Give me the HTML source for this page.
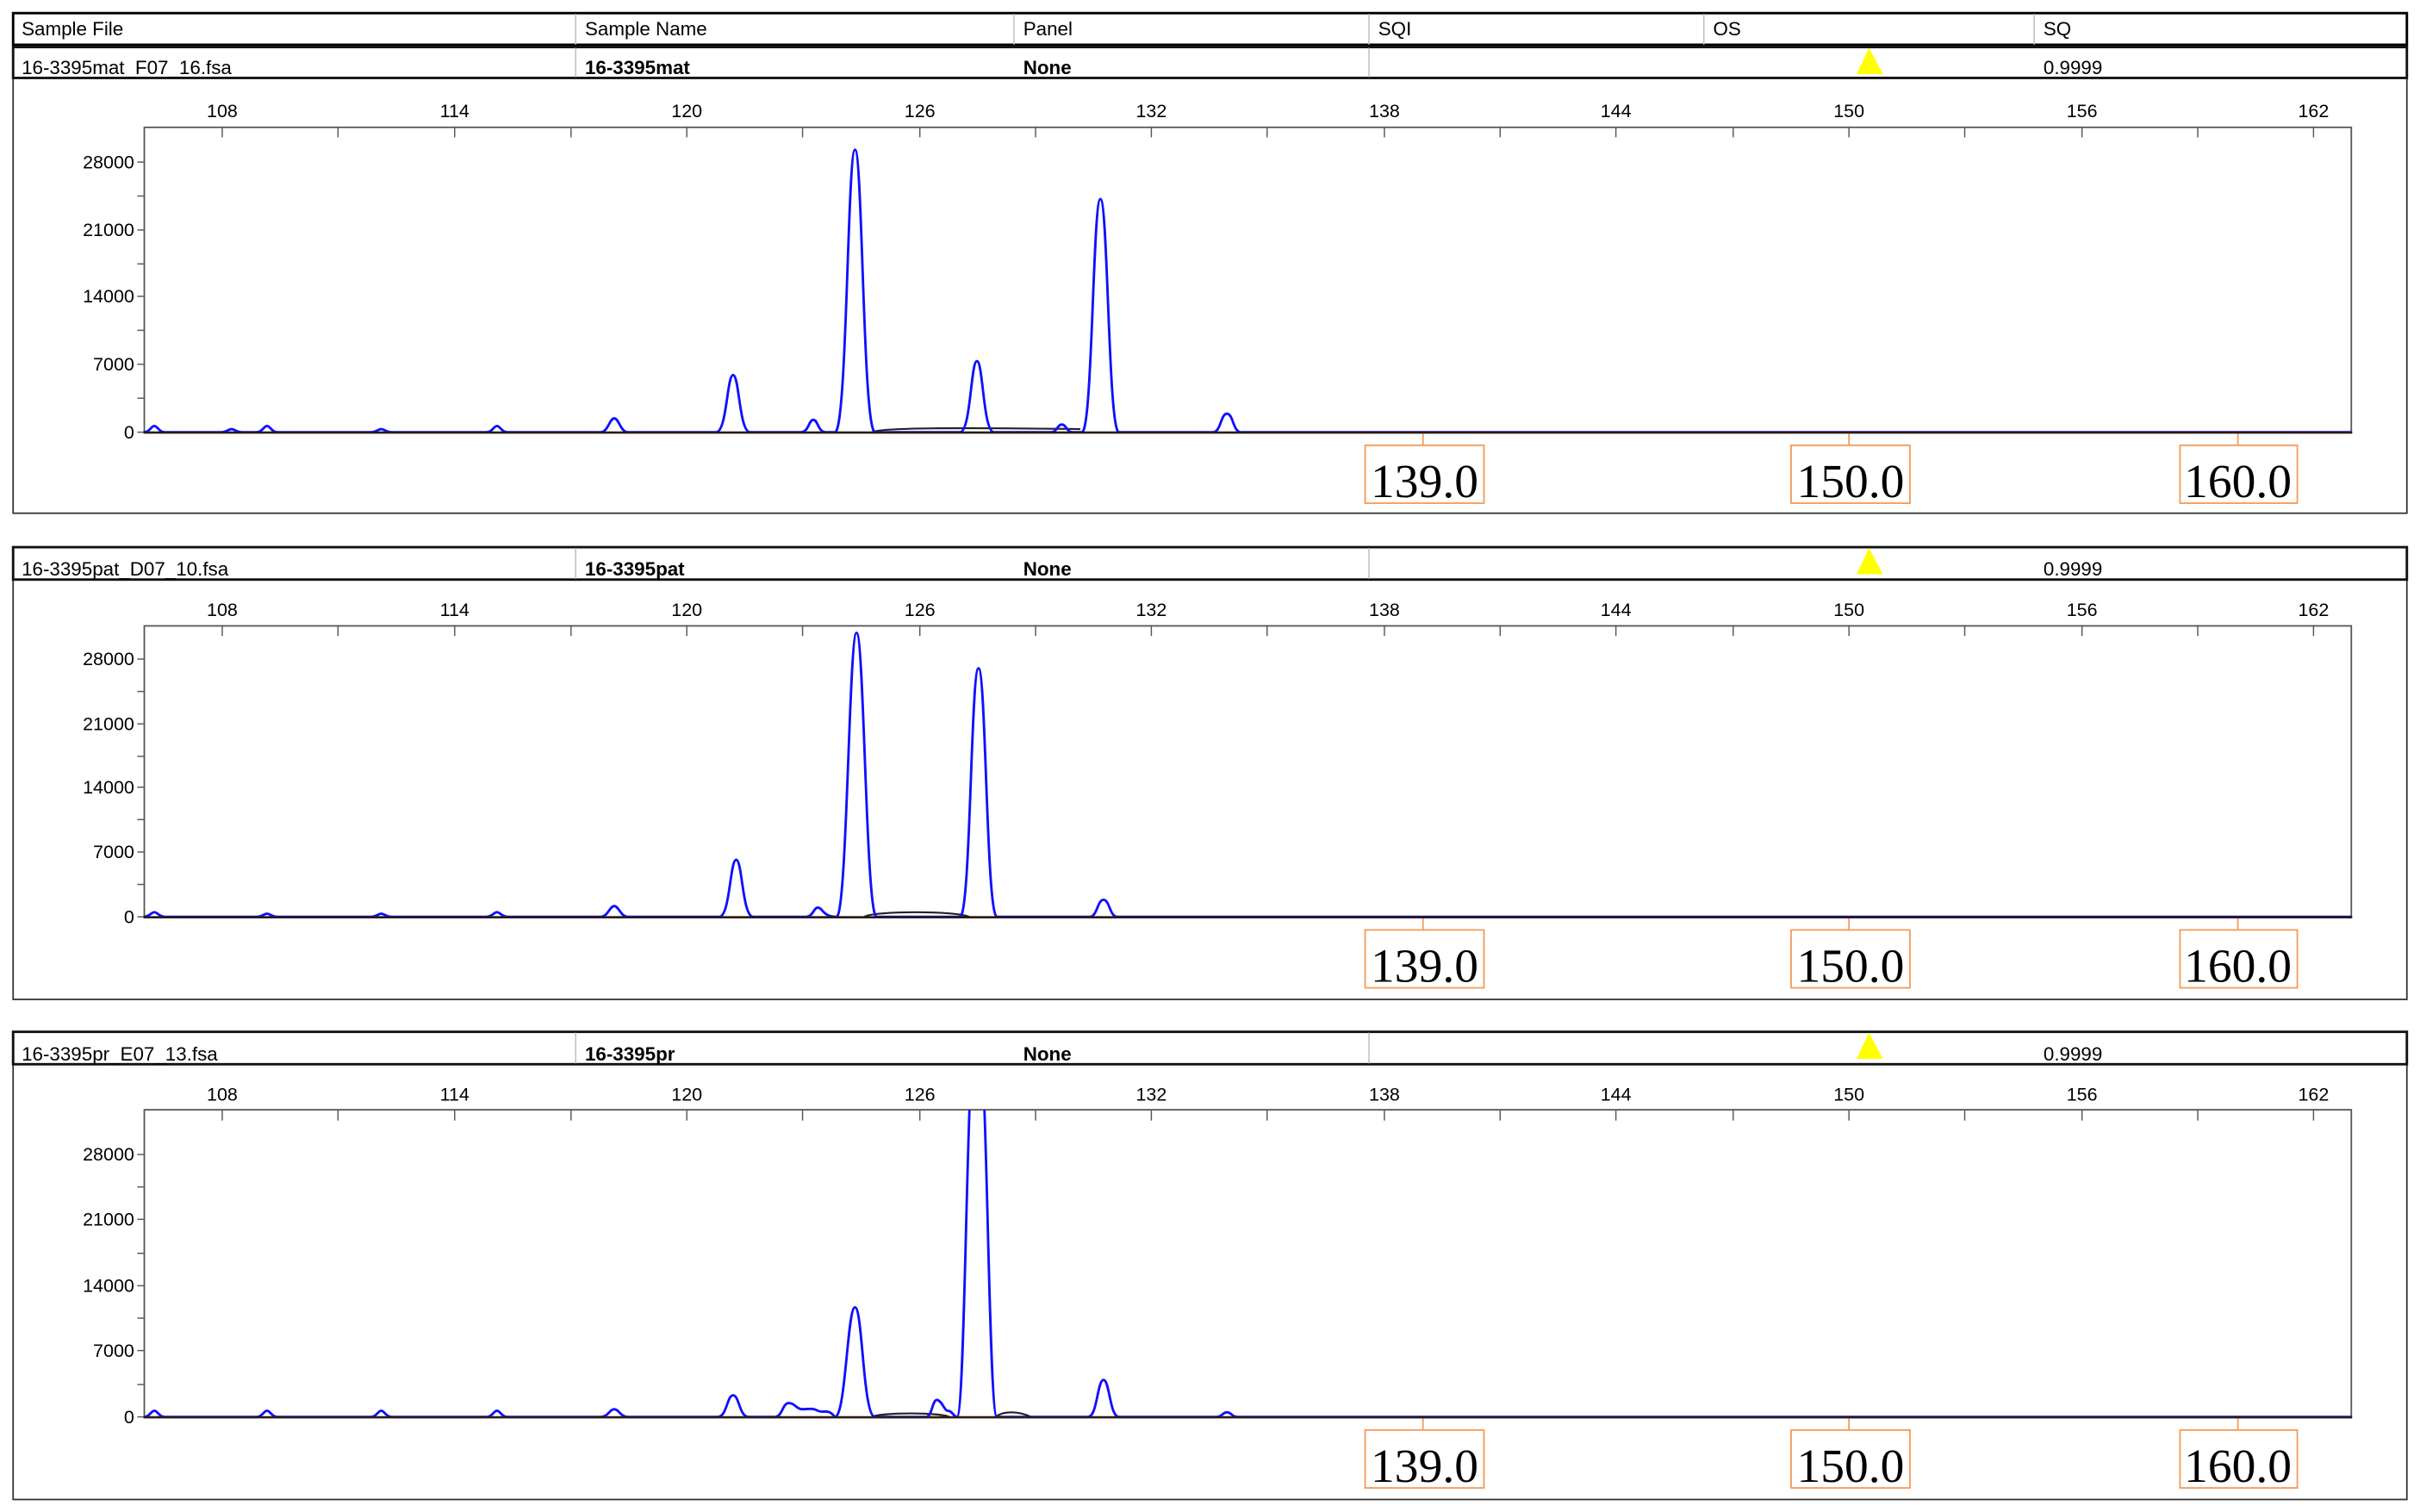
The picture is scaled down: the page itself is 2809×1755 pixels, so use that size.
<!DOCTYPE html>
<html><head><meta charset="utf-8"><style>
html,body{margin:0;padding:0;background:#fff;width:2809px;height:1755px;overflow:hidden}
svg{display:block}
text{font-family:"Liberation Sans",sans-serif}
.h{font-size:12.5px;fill:#000}
.ax{font-size:12px;fill:#000;text-anchor:middle}
.ay{font-size:12px;fill:#000;text-anchor:end}
.ob{font-family:"Liberation Serif",serif;font-size:31px;fill:#000;text-anchor:middle}
.tr{fill:none;stroke:#1010ff;stroke-width:1.6}
.bl{stroke:#2a1a10;stroke-width:1.4}
</style></head><body>
<svg width="2809" height="1755" viewBox="0 0 1568 979.6" preserveAspectRatio="none" xmlns="http://www.w3.org/2000/svg">
<defs>
<clipPath id="c3"><rect x="93" y="719" width="1431" height="201"/></clipPath>
</defs>
<rect x="8.5" y="8.5" width="1551" height="20.5" fill="#fff" stroke="#000" stroke-width="1.6"/>
<g stroke="#bbb" stroke-width="0.8"><line x1="373" y1="9" x2="373" y2="29"/><line x1="657" y1="9" x2="657" y2="29"/><line x1="887" y1="9" x2="887" y2="29"/><line x1="1104" y1="9" x2="1104" y2="29"/><line x1="1318" y1="9" x2="1318" y2="29"/></g>
<text class="h" x="14" y="23">Sample File</text><text class="h" x="379" y="23">Sample Name</text><text class="h" x="663" y="23">Panel</text><text class="h" x="893" y="23">SQI</text><text class="h" x="1110" y="23">OS</text><text class="h" x="1324" y="23">SQ</text>

<!-- PANEL 1 -->
<rect x="8.5" y="50.5" width="1551" height="282" fill="#fff" stroke="#333" stroke-width="1"/>
<rect x="8.5" y="30.5" width="1551" height="20" fill="#fff" stroke="#111" stroke-width="1.6"/>
<g stroke="#bbb" stroke-width="0.8"><line x1="373" y1="31" x2="373" y2="50"/><line x1="887" y1="31" x2="887" y2="50"/></g>
<text class="h" x="14" y="48">16-3395mat_F07_16.fsa</text><text class="h" x="379" y="48" font-weight="bold">16-3395mat</text><text class="h" x="663" y="48" font-weight="bold">None</text><text class="h" x="1324" y="48">0.9999</text>
<polygon points="1211,31 1203,48 1220,48" fill="#ffff00"/>
<rect x="93.5" y="82.5" width="1430" height="197.5" fill="none" stroke="#555" stroke-width="1"/>
<g stroke="#555" stroke-width="0.8">
<line x1="144" y1="82" x2="144" y2="89"/><line x1="219" y1="82" x2="219" y2="89"/><line x1="294.6" y1="82" x2="294.6" y2="89"/><line x1="370" y1="82" x2="370" y2="89"/><line x1="445" y1="82" x2="445" y2="89"/><line x1="520" y1="82" x2="520" y2="89"/><line x1="596" y1="82" x2="596" y2="89"/><line x1="671" y1="82" x2="671" y2="89"/><line x1="746" y1="82" x2="746" y2="89"/><line x1="821" y1="82" x2="821" y2="89"/><line x1="897" y1="82" x2="897" y2="89"/><line x1="972" y1="82" x2="972" y2="89"/><line x1="1047" y1="82" x2="1047" y2="89"/><line x1="1123" y1="82" x2="1123" y2="89"/><line x1="1198" y1="82" x2="1198" y2="89"/><line x1="1273" y1="82" x2="1273" y2="89"/><line x1="1349" y1="82" x2="1349" y2="89"/><line x1="1424" y1="82" x2="1424" y2="89"/><line x1="1499" y1="82" x2="1499" y2="89"/>
<line x1="89" y1="105" x2="93" y2="105"/><line x1="89" y1="127" x2="93" y2="127"/><line x1="89" y1="149" x2="93" y2="149"/><line x1="89" y1="171" x2="93" y2="171"/><line x1="89" y1="192" x2="93" y2="192"/><line x1="89" y1="214" x2="93" y2="214"/><line x1="89" y1="236" x2="93" y2="236"/><line x1="89" y1="258" x2="93" y2="258"/><line x1="89" y1="280" x2="93" y2="280"/>
</g>
<text class="ax" x="144" y="76">108</text><text class="ax" x="294.6" y="76">114</text><text class="ax" x="445" y="76">120</text><text class="ax" x="596" y="76">126</text><text class="ax" x="746" y="76">132</text><text class="ax" x="897" y="76">138</text><text class="ax" x="1047" y="76">144</text><text class="ax" x="1198" y="76">150</text><text class="ax" x="1349" y="76">156</text><text class="ax" x="1499" y="76">162</text>
<text class="ay" x="87" y="109">28000</text><text class="ay" x="87" y="153">21000</text><text class="ay" x="87" y="196">14000</text><text class="ay" x="87" y="240">7000</text><text class="ay" x="87" y="284">0</text>
<path d="M565 280 C570 277 620 277 700 278" fill="none" stroke="#222" stroke-width="1.2"/>
<path class="tr" d="M93 280 C97 280 98 276 100 276 C102 276 103 280 107 280 L143 280 C147 280 148 278 150 278 C152 278 153 280 157 280 L166 280 C170 280 171 276 173 276 C175 276 176 280 180 280 L240 280 C244 280 245 278 247 278 C249 278 250 280 254 280 L315 280 C319 280 320 276 322 276 C324 276 325 280 329 280 L389 280 C394 280 395 271 398 271 C401 271 402 280 407 280 L464 280 C471 280 471 243 475 243 C479 243 479 280 486 280 L519 280 C524 280 524 272 527 272 C530 272 530 280 535 280 L541 280 C549 280 549 97 554 97 C559 97 559 280 567 280 L622 280 C629 280 629 234 633 234 C637 234 637 280 644 280 L681 280 C685 280 685 275 688 275 C691 275 691 280 695 280 L701 280 C708 280 708 129 713 129 C718 129 718 280 725 280 L786 280 C791 280 791 268 795 268 C799 268 799 280 804 280 L1524 280"/>
<line class="bl" x1="93" y1="280.3" x2="1524" y2="280.3"/>
<g stroke="#f59a55" stroke-width="1" fill="#fff">
<line x1="922" y1="281" x2="922" y2="288"/><line x1="1198" y1="281" x2="1198" y2="288"/><line x1="1450" y1="281" x2="1450" y2="288"/>
<rect x="884.5" y="288.5" width="77" height="37.5"/><rect x="1160.5" y="288.5" width="77" height="37.5"/><rect x="1412.5" y="288.5" width="76" height="37.5"/>
</g>
<text class="ob" x="923" y="322">139.0</text><text class="ob" x="1199" y="322">150.0</text><text class="ob" x="1450" y="322">160.0</text>

<!-- PANEL 2 -->
<rect x="8.5" y="375.5" width="1551" height="272" fill="#fff" stroke="#333" stroke-width="1"/>
<rect x="8.5" y="354.5" width="1551" height="21" fill="#fff" stroke="#111" stroke-width="1.6"/>
<g stroke="#bbb" stroke-width="0.8"><line x1="373" y1="355" x2="373" y2="375"/><line x1="887" y1="355" x2="887" y2="375"/></g>
<text class="h" x="14" y="373">16-3395pat_D07_10.fsa</text><text class="h" x="379" y="373" font-weight="bold">16-3395pat</text><text class="h" x="663" y="373" font-weight="bold">None</text><text class="h" x="1324" y="373">0.9999</text>
<polygon points="1211,355 1203,372 1220,372" fill="#ffff00"/>
<rect x="93.5" y="405.5" width="1430" height="188.5" fill="none" stroke="#555" stroke-width="1"/>
<g stroke="#555" stroke-width="0.8">
<line x1="144" y1="405" x2="144" y2="412"/><line x1="219" y1="405" x2="219" y2="412"/><line x1="294.6" y1="405" x2="294.6" y2="412"/><line x1="370" y1="405" x2="370" y2="412"/><line x1="445" y1="405" x2="445" y2="412"/><line x1="520" y1="405" x2="520" y2="412"/><line x1="596" y1="405" x2="596" y2="412"/><line x1="671" y1="405" x2="671" y2="412"/><line x1="746" y1="405" x2="746" y2="412"/><line x1="821" y1="405" x2="821" y2="412"/><line x1="897" y1="405" x2="897" y2="412"/><line x1="972" y1="405" x2="972" y2="412"/><line x1="1047" y1="405" x2="1047" y2="412"/><line x1="1123" y1="405" x2="1123" y2="412"/><line x1="1198" y1="405" x2="1198" y2="412"/><line x1="1273" y1="405" x2="1273" y2="412"/><line x1="1349" y1="405" x2="1349" y2="412"/><line x1="1424" y1="405" x2="1424" y2="412"/><line x1="1499" y1="405" x2="1499" y2="412"/>
<line x1="89" y1="427" x2="93" y2="427"/><line x1="89" y1="448" x2="93" y2="448"/><line x1="89" y1="469" x2="93" y2="469"/><line x1="89" y1="490" x2="93" y2="490"/><line x1="89" y1="510" x2="93" y2="510"/><line x1="89" y1="531" x2="93" y2="531"/><line x1="89" y1="552" x2="93" y2="552"/><line x1="89" y1="573" x2="93" y2="573"/><line x1="89" y1="594" x2="93" y2="594"/>
</g>
<text class="ax" x="144" y="399">108</text><text class="ax" x="294.6" y="399">114</text><text class="ax" x="445" y="399">120</text><text class="ax" x="596" y="399">126</text><text class="ax" x="746" y="399">132</text><text class="ax" x="897" y="399">138</text><text class="ax" x="1047" y="399">144</text><text class="ax" x="1198" y="399">150</text><text class="ax" x="1349" y="399">156</text><text class="ax" x="1499" y="399">162</text>
<text class="ay" x="87" y="431">28000</text><text class="ay" x="87" y="473">21000</text><text class="ay" x="87" y="514">14000</text><text class="ay" x="87" y="556">7000</text><text class="ay" x="87" y="598">0</text>
<path d="M560 594 C566 590 620 590 628 594" fill="none" stroke="#222" stroke-width="1.2"/>
<path class="tr" d="M93 594 C97 594 98 591 100 591 C102 591 103 594 107 594 L166 594 C170 594 171 592 173 592 C175 592 176 594 180 594 L240 594 C244 594 245 592 247 592 C249 592 250 594 254 594 L315 594 C319 594 320 591 322 591 C324 591 325 594 329 594 L389 594 C394 594 395 587 398 587 C401 587 402 594 407 594 L466 594 C473 594 473 557 477 557 C481 557 481 594 488 594 L522 594 C527 594 527 588 530 588 C533 588 533 594 542 594 C549 594 550 410 555 410 C560 410 561 594 568 594 L622 594 C629 594 629 433 634 433 C639 433 639 594 646 594 L706 594 C711 594 711 583 715 583 C719 583 719 594 724 594 L1524 594"/>
<line class="bl" x1="93" y1="594.3" x2="1524" y2="594.3"/>
<g stroke="#f59a55" stroke-width="1" fill="#fff">
<line x1="922" y1="595" x2="922" y2="602"/><line x1="1198" y1="595" x2="1198" y2="602"/><line x1="1450" y1="595" x2="1450" y2="602"/>
<rect x="884.5" y="602.5" width="77" height="37.5"/><rect x="1160.5" y="602.5" width="77" height="37.5"/><rect x="1412.5" y="602.5" width="76" height="37.5"/>
</g>
<text class="ob" x="923" y="636">139.0</text><text class="ob" x="1199" y="636">150.0</text><text class="ob" x="1450" y="636">160.0</text>

<!-- PANEL 3 -->
<rect x="8.5" y="689.5" width="1551" height="282" fill="#fff" stroke="#333" stroke-width="1"/>
<rect x="8.5" y="668.5" width="1551" height="21" fill="#fff" stroke="#111" stroke-width="1.6"/>
<g stroke="#bbb" stroke-width="0.8"><line x1="373" y1="669" x2="373" y2="689"/><line x1="887" y1="669" x2="887" y2="689"/></g>
<text class="h" x="14" y="687">16-3395pr_E07_13.fsa</text><text class="h" x="379" y="687" font-weight="bold">16-3395pr</text><text class="h" x="663" y="687" font-weight="bold">None</text><text class="h" x="1324" y="687">0.9999</text>
<polygon points="1211,669 1203,686 1220,686" fill="#ffff00"/>
<rect x="93.5" y="719" width="1430" height="199" fill="none" stroke="#555" stroke-width="1"/>
<g stroke="#555" stroke-width="0.8">
<line x1="144" y1="719" x2="144" y2="726"/><line x1="219" y1="719" x2="219" y2="726"/><line x1="294.6" y1="719" x2="294.6" y2="726"/><line x1="370" y1="719" x2="370" y2="726"/><line x1="445" y1="719" x2="445" y2="726"/><line x1="520" y1="719" x2="520" y2="726"/><line x1="596" y1="719" x2="596" y2="726"/><line x1="671" y1="719" x2="671" y2="726"/><line x1="746" y1="719" x2="746" y2="726"/><line x1="821" y1="719" x2="821" y2="726"/><line x1="897" y1="719" x2="897" y2="726"/><line x1="972" y1="719" x2="972" y2="726"/><line x1="1047" y1="719" x2="1047" y2="726"/><line x1="1123" y1="719" x2="1123" y2="726"/><line x1="1198" y1="719" x2="1198" y2="726"/><line x1="1273" y1="719" x2="1273" y2="726"/><line x1="1349" y1="719" x2="1349" y2="726"/><line x1="1424" y1="719" x2="1424" y2="726"/><line x1="1499" y1="719" x2="1499" y2="726"/>
<line x1="89" y1="748" x2="93" y2="748"/><line x1="89" y1="769" x2="93" y2="769"/><line x1="89" y1="790" x2="93" y2="790"/><line x1="89" y1="812" x2="93" y2="812"/><line x1="89" y1="833" x2="93" y2="833"/><line x1="89" y1="854" x2="93" y2="854"/><line x1="89" y1="875" x2="93" y2="875"/><line x1="89" y1="897" x2="93" y2="897"/><line x1="89" y1="918" x2="93" y2="918"/>
</g>
<text class="ax" x="144" y="713">108</text><text class="ax" x="294.6" y="713">114</text><text class="ax" x="445" y="713">120</text><text class="ax" x="596" y="713">126</text><text class="ax" x="746" y="713">132</text><text class="ax" x="897" y="713">138</text><text class="ax" x="1047" y="713">144</text><text class="ax" x="1198" y="713">150</text><text class="ax" x="1349" y="713">156</text><text class="ax" x="1499" y="713">162</text>
<text class="ay" x="87" y="752">28000</text><text class="ay" x="87" y="794">21000</text><text class="ay" x="87" y="837">14000</text><text class="ay" x="87" y="879">7000</text><text class="ay" x="87" y="922">0</text>
<path d="M565 918 C570 915 610 915 615 918 M645 918 C650 914 660 914 668 918" fill="none" stroke="#222" stroke-width="1.2"/>
<g clip-path="url(#c3)">
<path class="tr" d="M93 918 C97 918 98 914 100 914 C102 914 103 918 107 918 L166 918 C170 918 171 914 173 914 C175 914 176 918 180 918 L240 918 C244 918 245 914 247 914 C249 914 250 918 254 918 L315 918 C319 918 320 914 322 914 C324 914 325 918 329 918 L389 918 C394 918 395 913 398 913 C401 913 402 918 407 918 L465 918 C471 918 471 904 475 904 C479 904 479 918 485 918 L502 918 C507 918 507 909 511 909 C515 909 516 913 520 913 C524 913 526 912 530 914 C534 916 536 912 541 918 C548 918 549 847 554 847 C559 847 559 918 567 918 L600 918 C604 918 604 907 607 907 C610 907 612 914 614 914 C617 914 618 918 620 918 C626 918 626 660 633 660 C640 660 640 918 646 918 L705 918 C711 918 711 894 715 894 C719 894 719 918 725 918 L788 918 C792 918 792 915 795 915 C798 915 798 918 802 918 L1524 918"/>
</g>
<line class="bl" x1="93" y1="918.3" x2="1524" y2="918.3"/>
<g stroke="#f59a55" stroke-width="1" fill="#fff">
<line x1="922" y1="919" x2="922" y2="926"/><line x1="1198" y1="919" x2="1198" y2="926"/><line x1="1450" y1="919" x2="1450" y2="926"/>
<rect x="884.5" y="926.5" width="77" height="37.5"/><rect x="1160.5" y="926.5" width="77" height="37.5"/><rect x="1412.5" y="926.5" width="76" height="37.5"/>
</g>
<text class="ob" x="923" y="960">139.0</text><text class="ob" x="1199" y="960">150.0</text><text class="ob" x="1450" y="960">160.0</text>
</svg>
</body></html>
